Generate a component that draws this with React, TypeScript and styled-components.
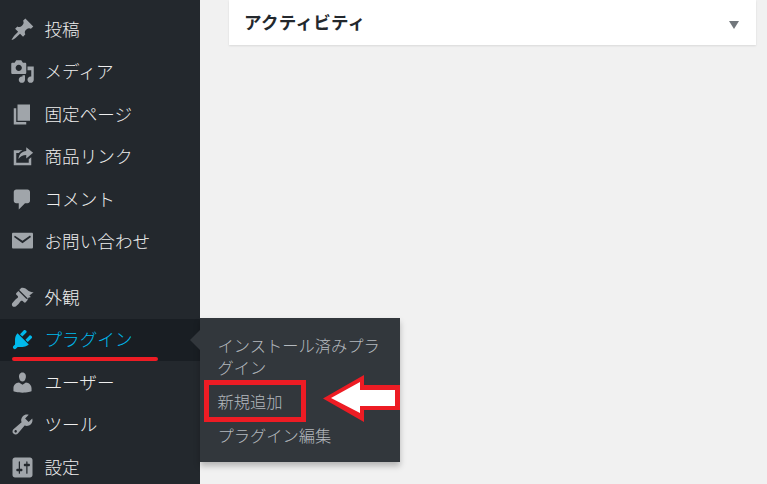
import React from "react";
import styled, { createGlobalStyle } from "styled-components";

const GlobalStyle = createGlobalStyle`
  html, body {
    margin: 0;
    padding: 0;
    height: 100%;
    overflow: hidden;
    background: #f1f1f1;
    font-family: "Noto Sans CJK JP", "Noto Sans", sans-serif;
  }
`;

const icons: Record<string, string> = {
  post: "M10.44 3.02l1.82-1.82 6.36 6.35-1.83 1.82c-1.05-.68-2.48-.57-3.41.36l-.75.75c-.92.93-1.04 2.35-.35 3.41l-1.83 1.82-2.41-2.41-2.8 2.79c-.42.42-3.38 2.71-3.8 2.29s1.86-3.39 2.28-3.81l2.79-2.79L4.1 9.36l1.83-1.82c1.05.69 2.48.57 3.4-.36l.75-.75c.93-.92 1.05-2.35.36-3.41z",
  media: "M13 11V4c0-.55-.45-1-1-1h-1.67L9 1H5L3.67 3H2c-.55 0-1 .45-1 1v7c0 .55.45 1 1 1h10c.55 0 1-.45 1-1zM7 4.5c1.38 0 2.5 1.12 2.5 2.5S8.38 9.5 7 9.5 4.5 8.38 4.5 7 5.62 4.5 7 4.5zM14 6h5v10.5c0 1.38-1.12 2.5-2.5 2.5S14 17.88 14 16.5s1.12-2.5 2.5-2.5c.17 0 .34.02.5.05V9h-3V6zm-4 8.05V13h2v3.5c0 1.38-1.12 2.5-2.5 2.5S7 17.88 7 16.5 8.12 14 9.5 14c.17 0 .34.02.5.05z",
  page: "M6 15V2h10v13H6zm-1 1h8v2H3V5h2v11z",
  share: "M3 5h7c-1.3.6-2.3 1.3-3 2.2H5V15h10v-2.8l2-1.6V17H3V5zm10-2.5l5.5 4.5-5.5 4.5V8.800c-2.8 0-4.7.9-6.2 3.2.3-3.7 2.8-6.200 6.2-6.400V2.500z",
  comment: "M5 2h9c1.1 0 2 .9 2 2v7c0 1.1-.9 2-2 2h-2l-5 5v-5H5c-1.1 0-2-.9-2-2V4c0-1.100.9-2 2-2z",
  mail: "M2.6 3h14.800c.55 0 1 .45 1 1v10.500c0 .55-.45 1-1 1H2.600c-.55 0-1-.45-1-1V4c0-.55.45-1 1-1zm1.400 2.200L3.200 6.400 10 11.300l6.800-4.900-.8-1.200-6 4.200-6-4.100z",
  brush: "M14.48 11.06L7.41 3.99l1.5-1.5c.5-.56 2.3-.47 3.51.32 1.21.8 1.43 1.28 2.91 2.1 1.48.81 3.57.96 3.57.96l-3.4 2.6 1.2 1.1-2 .7-.5 1.5-1.72-.71zm-.71.71L6.7 4.7 5.1 6.3c-.39.39-.39 1.03 0 1.42l1.06 1.06c.39.39.39 1.03 0 1.42-.6.6-1.42 1-2.49 2.1-1.28 1.27-2.17 2.3-2.17 3.2 0 1 .8 1.9 1.9 1.9.9 0 1.9-.9 3.2-2.1 1.1-1.1 1.5-1.9 2.1-2.5.39-.39 1.03-.39 1.42 0l1.06 1.06c.39.39 1.02.39 1.41 0l1.48-1.86z",
  plugin: "M13.11 4.36L9.87 7.6 8 5.73l3.24-3.24c.35-.34 1.05-.2 1.56.31.52.51.66 1.21.31 1.56zm-8 1.77l.91-1.12 9.01 9.01-1.19.84c-.71.71-2.63 1.16-3.82 1.16H6.14L4.9 17.26c-.59.59-1.54.59-2.12 0-.59-.58-.59-1.53 0-2.12l1.24-1.24v-3.88c0-1.13.4-3.19 1.09-3.89zm7.26 3.97l3.24-3.24c.34-.35 1.04-.21 1.55.31.52.51.66 1.21.31 1.55l-3.24 3.25z",
  user: "M10 9.25c-2.27 0-2.73-3.44-2.73-3.44C7 4.02 7.82 2 9.97 2c2.16 0 2.98 2.02 2.71 3.81 0 0-.41 3.44-2.68 3.44zm0 2.57L12.72 10c2.39 0 4.52 2.33 4.52 4.53v2.49s-3.65 1.13-7.24 1.13c-3.65 0-7.24-1.13-7.24-1.13v-2.49c0-2.25 1.94-4.48 4.44-4.48z",
  tools: "M16.68 9.77c-1.34 1.34-3.3 1.67-4.95.99l-5.41 6.52c-.99.99-2.59.99-3.57 0-.99-.98-.99-2.58 0-3.57l6.52-5.42c-.68-1.65-.35-3.61.99-4.95 1.28-1.28 3.12-1.62 4.72-1.06l-2.89 2.89 2.82 2.82 2.86-2.87c.53 1.58.18 3.4-1.09 4.67zM3.81 16.21c.4.39 1.04.39 1.43 0 .4-.4.4-1.04 0-1.43-.39-.4-1.03-.4-1.43 0-.39.39-.39 1.03 0 1.43z",
  settings: "M18 16V4c0-1.1-.9-2-2-2H4c-1.1 0-2 .9-2 2v12c0 1.1.9 2 2 2h12c1.1 0 2-.9 2-2zM8 11h1c.55 0 1 .45 1 1s-.45 1-1 1H8v1.5c0 .28-.22.5-.5.5s-.5-.22-.5-.5V13H6c-.55 0-1-.45-1-1s.45-1 1-1h1V5.5c0-.28.22-.5.5-.5s.5.22.5.5V11zm5-2h-1c-.55 0-1-.45-1-1s.45-1 1-1h1V5.5c0-.28.22-.5.5-.5s.5.22.5.5V7h1c.55 0 1 .45 1 1s-.45 1-1 1h-1v5.5c0 .28-.22.5-.5.5s-.5-.22-.5-.5V9z",
};

function Icon({ name, active }: { name: string; active?: boolean }) {
  return (
    <IconSvg viewBox="0 0 20 20" $active={active}>
      <path d={icons[name]} />
    </IconSvg>
  );
}

function Arrow() {
  return (
    <ArrowSvg viewBox="0 0 80 56">
      <path d="M3 28.500L44 5v10h36v25H44v12z" fill="#ed1c24" />
      <path d="M11 28L40 12v8h35v16H40v7z" fill="#fff" />
    </ArrowSvg>
  );
}

export default function App() {
  return (
    <>
      <GlobalStyle />
      <Page>
        <Sidebar>
          <MenuItem><Icon name="post" /><Label>投稿</Label></MenuItem>
          <MenuItem><Icon name="media" /><Label>メディア</Label></MenuItem>
          <MenuItem><Icon name="page" /><Label>固定ページ</Label></MenuItem>
          <MenuItem><Icon name="share" /><Label>商品リンク</Label></MenuItem>
          <MenuItem><Icon name="comment" /><Label>コメント</Label></MenuItem>
          <MenuItem><Icon name="mail" /><Label>お問い合わせ</Label></MenuItem>
          <Separator />
          <MenuItem><Icon name="brush" /><Label>外観</Label></MenuItem>
          <MenuItem $active>
            <Icon name="plugin" active />
            <Label $active>プラグイン</Label>
            <Underline />
            <Flyout>
              <SubItem>インストール済みプラグイン</SubItem>
              <SubItem>新規追加</SubItem>
              <SubItem>プラグイン編集</SubItem>
              <RedBox />
              <Arrow />
            </Flyout>
          </MenuItem>
          <MenuItem><Icon name="user" /><Label>ユーザー</Label></MenuItem>
          <MenuItem><Icon name="tools" /><Label>ツール</Label></MenuItem>
          <MenuItem><Icon name="settings" /><Label>設定</Label></MenuItem>
        </Sidebar>
        <Main>
          <Card>
            <CardTitle>アクティビティ</CardTitle>
            <Caret />
          </Card>
        </Main>
      </Page>
    </>
  );
}

const Page = styled.div`
  display: flex;
  height: 484px;
  overflow: hidden;
`;

const Sidebar = styled.nav`
  width: 200px;
  flex-shrink: 0;
  padding-top: 8px;
  background: #23282d;
  box-sizing: border-box;
`;

const MenuItem = styled.div<{ $active?: boolean }>`
  position: relative;
  display: flex;
  align-items: center;
  height: 42.5px;
  padding-left: 10px;
  background: ${(p) => (p.$active ? "#191e23" : "transparent")};
`;

const IconSvg = styled.svg<{ $active?: boolean }>`
  width: 25px;
  height: 25px;
  flex-shrink: 0;
  fill: ${(p) => (p.$active ? "#00b9eb" : "#a0a5aa")};
`;

const Label = styled.span<{ $active?: boolean }>`
  margin-left: 9.5px;
  padding-bottom: 1px;
  font-size: 17.6px;
  font-weight: 300;
  line-height: 22px;
  color: ${(p) => (p.$active ? "#00b9eb" : "#eeeeee")};
`;

const Separator = styled.div`
  height: 13px;
`;

const Underline = styled.div`
  position: absolute;
  left: 12px;
  bottom: 0;
  width: 146px;
  height: 4px;
  border-radius: 2px;
  background: #ed1c24;
`;

const Flyout = styled.div`
  position: absolute;
  left: 200px;
  top: -0.5px;
  width: 200px;
  box-sizing: border-box;
  padding: 9.5px 0 10px;
  background: #32373c;
  box-shadow: 0 4px 6px rgba(0, 0, 0, 0.25);

  &::before {
    content: "";
    position: absolute;
    left: -10px;
    top: 12px;
    border: 10px solid transparent;
    border-left-width: 0;
    border-right-color: #32373c;
  }
`;

const SubItem = styled.div`
  padding: 6px 15px 6px 17.5px;
  font-size: 16.25px;
  font-weight: 300;
  line-height: 22px;
  color: #b4b9be;
`;

const RedBox = styled.div`
  position: absolute;
  left: 4px;
  top: 62px;
  width: 92px;
  height: 32px;
  border: 5px solid #ed1c24;
`;

const ArrowSvg = styled.svg`
  position: absolute;
  left: 120px;
  top: 52px;
  width: 80px;
  height: 56px;
`;

const Main = styled.main`
  flex: 1;
  padding: 0 11px 0 29px;
`;

const Card = styled.section`
  display: flex;
  align-items: center;
  justify-content: space-between;
  height: 45px;
  padding: 0 17px 0 15px;
  background: #ffffff;
  box-shadow: 0 1px 2px rgba(0, 0, 0, 0.1);
`;

const CardTitle = styled.h2`
  margin: 0 0 2px;
  font-size: 17.5px;
  font-weight: 700;
  line-height: 22px;
  letter-spacing: 0.3px;
  color: #23282d;
`;

const Caret = styled.div`
  width: 0;
  height: 0;
  margin-top: 5px;
  border-left: 5px solid transparent;
  border-right: 5px solid transparent;
  border-top: 8px solid #72777c;
`;
